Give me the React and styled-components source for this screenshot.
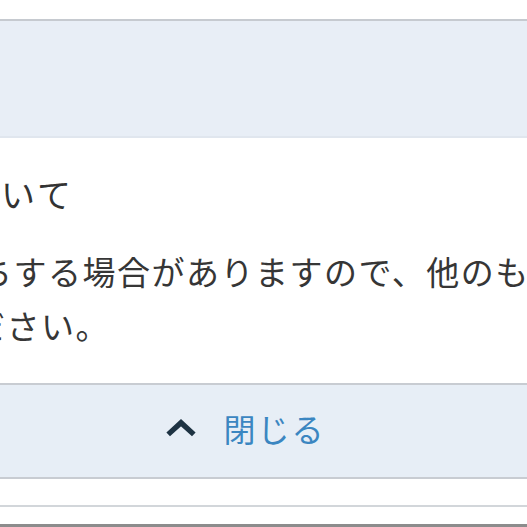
import React from "react";
import styled, { createGlobalStyle } from "styled-components";

const GlobalStyle = createGlobalStyle`
  html, body {
    margin: 0;
    padding: 0;
    background: #fff;
    overflow: hidden;
  }
  body {
    font-family: "Noto Sans CJK JP", "Noto Sans", sans-serif;
    color: #333;
  }
`;

const App = () => {
  return (
    <Page>
      <GlobalStyle />
      <TopGap />
      <HeaderPanel />
      <Content>
        <Heading>色について</Heading>
        <Body>
          <Line>色落ちする場合がありますので、他のものと分けて洗っ</Line>
          <Line $shift={-6}>てください。</Line>
        </Body>
      </Content>
      <CloseBar>
        <CloseButton type="button">
          <Chevron viewBox="0 0 30 20">
            <polyline points="3,16 15,5 27,16" />
          </Chevron>
          <CloseLabel>閉じる</CloseLabel>
        </CloseButton>
      </CloseBar>
      <Spacer $h={26} />
      <Divider />
      <Spacer $h={17} />
      <BottomLine />
    </Page>
  );
};

export default App;

const Page = styled.div`
  width: 527px;
  height: 527px;
  overflow: hidden;
  display: flex;
  flex-direction: column;
`;
const TopGap = styled.div`
  height: 19px;
  flex-shrink: 0;
`;
const HeaderPanel = styled.div`
  height: 115px;
  flex-shrink: 0;
  border-top: 2px solid #c6cad0;
  border-bottom: 2px solid #e0e6ee;
  background: #e8eef6;
`;
const Content = styled.div`
  height: 245px;
  flex-shrink: 0;
  margin-left: -90px;
  padding-top: 32px;
  box-sizing: border-box;
  white-space: nowrap;
`;
const Heading = styled.h3`
  margin: 0 0 0 -20px;
  font-size: 34px;
  font-weight: 400;
  line-height: 48px;
  letter-spacing: 3px;
  color: #333;
`;
const Body = styled.div`
  margin-top: 26px;
  font-size: 33px;
  font-weight: 400;
  line-height: 54px;
  letter-spacing: 1.5px;
  color: #363636;
`;
const Line = styled.div`
  margin-left: ${(p) => p.$shift || 0}px;
`;
const CloseBar = styled.div`
  height: 92px;
  flex-shrink: 0;
  border-top: 2px solid #c8ccd2;
  border-bottom: 2px solid #c8ccd2;
  background: #e7eef6;
  display: flex;
  align-items: center;
  justify-content: center;
`;
const CloseButton = styled.button`
  display: flex;
  align-items: center;
  gap: 26px;
  background: none;
  border: none;
  padding: 0 36px 6px 0;
  cursor: pointer;
  font-family: inherit;
`;
const Chevron = styled.svg`
  width: 32px;
  height: 22px;
  fill: none;
  stroke: #1e3343;
  stroke-width: 5;
  stroke-linejoin: miter;
`;
const CloseLabel = styled.span`
  font-size: 32px;
  font-weight: 400;
  letter-spacing: 2px;
  color: #3b86c1;
`;
const Spacer = styled.div`
  height: ${(p) => p.$h || 27}px;
  flex-shrink: 0;
`;
const Divider = styled.div`
  height: 2px;
  flex-shrink: 0;
  background: #d2d6da;
`;
const BottomLine = styled.div`
  height: 3px;
  flex-shrink: 0;
  background: #8c8c8c;
`;
